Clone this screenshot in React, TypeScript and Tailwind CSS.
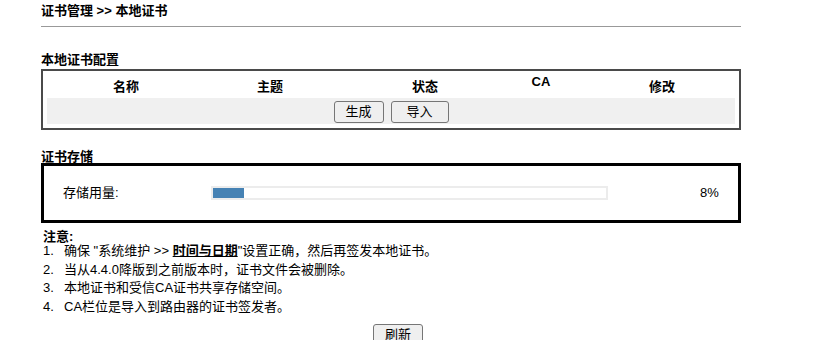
const notes = [
  "当从4.4.0降版到之前版本时，证书文件会被删除。",
  "本地证书和受信CA证书共享存储空间。",
  "CA栏位是导入到路由器的证书签发者。",
]

const Btn = ({ label, w }: { label: string; w: string }) => (
  <button
    className={`${w} h-[22px] border border-[#767676] rounded-[3px] bg-[#efefef] text-[13px] leading-[20px] text-black`}
  >
    {label}
  </button>
)

const App = () => {
  const usage = 8

  return (
    <div
      className="w-[818px] h-[340px] overflow-hidden bg-white text-black text-[13px]"
      style={{ fontFamily: '"Liberation Sans", "Noto Sans CJK SC", sans-serif' }}
    >
      <div className="ml-[41px] w-[700px]">
        {/* page title */}
        <div className="h-[22px] leading-[22px] font-bold">证书管理 &gt;&gt; 本地证书</div>
        <div className="mt-[4px] h-px bg-[#999]" />

        {/* local certificate config */}
        <div className="mt-[24px] h-[18px] leading-[18px] font-bold">本地证书配置</div>
        <div className="border-2 border-[#4a4a4a] px-[4px] pb-[4px]">
          <div className="grid grid-cols-[158px_130px_180px_52px_168px] h-[27px] font-bold leading-[18px]">
            <div className="pt-[7px] text-center">名称</div>
            <div className="pt-[7px] text-center">主题</div>
            <div className="pt-[7px] text-center">状态</div>
            <div className="pt-[2px] text-center">CA</div>
            <div className="pt-[7px] pl-[22px] text-center">修改</div>
          </div>
          <div className="h-[26px] bg-[#f0f0f0] flex items-start justify-center gap-[7px] pt-[3px]">
            <Btn label="生成" w="w-[50px]" />
            <Btn label="导入" w="w-[58px]" />
          </div>
        </div>

        {/* storage */}
        <div className="mt-[19px] h-[15px] leading-[15px] font-bold">证书存储</div>
        <div className="-mt-px h-[60px] border-[3px] border-black flex items-center">
          <div className="w-[167px] pl-[19px] leading-[18px]">存储用量:</div>
          <div className="w-[397px] h-[14px] border-2 border-[#ececec]">
            <div className="h-full bg-[#4682b4]" style={{ width: `${usage}%` }} />
          </div>
          <div className="ml-[92px] leading-[18px]">{usage}%</div>
        </div>

        {/* notes */}
        <div className="mt-[7px] h-[14px] leading-[14px] font-bold ml-[2px]">注意:</div>
        <div className="mt-[-2px] leading-[18.67px]">
          <div className="flex">
            <span className="w-[23px] pl-[2px]">1.</span>
            <span>
              确保 "系统维护 &gt;&gt; <span className="font-bold underline">时间与日期</span>"设置正确，然后再签发本地证书。
            </span>
          </div>
          {notes.map((n, i) => (
            <div key={i} className="flex">
              <span className="w-[23px] pl-[2px]">{i + 2}.</span>
              <span>{n}</span>
            </div>
          ))}
        </div>
        <div className="mt-[7px] pl-[332px]">
          <Btn label="刷新" w="w-[50px]" />
        </div>
      </div>
    </div>
  )
}

export default App
